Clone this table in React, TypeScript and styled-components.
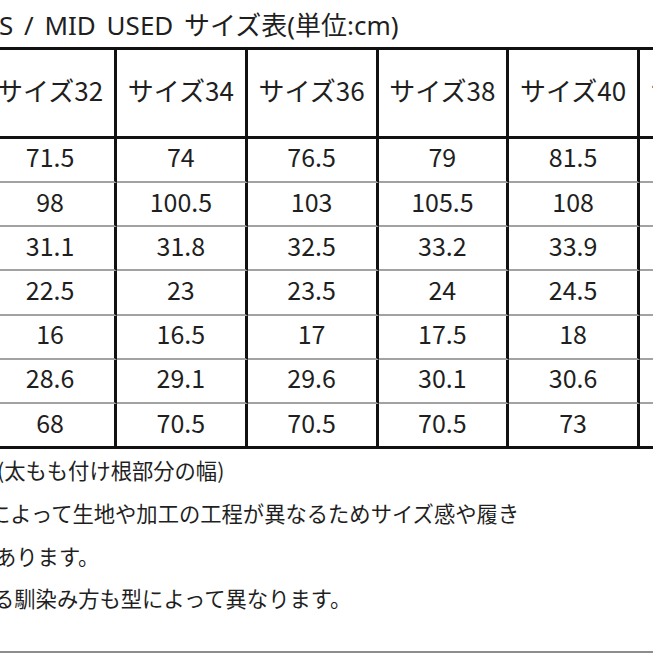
import React from "react";
import styled, { createGlobalStyle } from "styled-components";

const Global = createGlobalStyle`
  html, body { margin: 0; padding: 0; background: #ffffff; }
  body { overflow: hidden; }
`;

const Page = styled.div`
  width: 653px;
  height: 653px;
  overflow: hidden;
  background: #ffffff;
  color: #1f1f1f;
  font-family: "Noto Sans CJK JP", "Noto Sans", sans-serif;
  display: flex;
  flex-direction: column;
`;

const Title = styled.div`
  box-sizing: border-box;
  height: 47px;
  padding-top: 12px;
  margin-left: -1px;
  font-family: "Noto Sans", "Noto Sans CJK JP", sans-serif;
  font-size: 26px;
  line-height: 26px;
  word-spacing: 4px;
  white-space: nowrap;
`;

const SizeTable = styled.div`
  display: grid;
  grid-template-columns: repeat(6, 130.75px);
  margin-left: -13.75px;
  width: max-content;
`;

const HeadCell = styled.div`
  box-sizing: border-box;
  height: 92px;
  border-top: 3px solid #111;
  border-bottom: 3px solid #111;
  border-right: 3px solid #111;
  padding-bottom: 6px;
  display: flex;
  align-items: center;
  justify-content: center;
  font-size: 26px;
  line-height: 26px;
  white-space: nowrap;
`;

const DataCell = styled.div<{ $last?: boolean }>`
  box-sizing: border-box;
  height: ${(p) => (p.$last ? "45.3px" : "44.2px")};
  border-right: 3px solid #111;
  border-bottom: ${(p) => (p.$last ? "3px solid #111" : "2px solid #a2a2a2")};
  padding-bottom: 6px;
  display: flex;
  align-items: center;
  justify-content: center;
  font-size: 25px;
  line-height: 25px;
  white-space: nowrap;
`;

const Notes = styled.div`
  display: flex;
  flex-direction: column;
  padding-bottom: 31px;
`;

const NoteLine = styled.div<{ $shift: number }>`
  margin-left: ${(p) => -p.$shift}px;
  font-size: 21.3px;
  line-height: 42.7px;
  height: 42.7px;
  white-space: nowrap;
`;

const Divider = styled.div`
  height: 2px;
  background: #8d8d8d;
  flex-shrink: 0;
`;

const sizes = ["サイズ32", "サイズ34", "サイズ36", "サイズ38", "サイズ40", "サイズ42"];

const rows: string[][] = [
  ["71.5", "74", "76.5", "79", "81.5", ""],
  ["98", "100.5", "103", "105.5", "108", ""],
  ["31.1", "31.8", "32.5", "33.2", "33.9", ""],
  ["22.5", "23", "23.5", "24", "24.5", ""],
  ["16", "16.5", "17", "17.5", "18", ""],
  ["28.6", "29.1", "29.6", "30.1", "30.6", ""],
  ["68", "70.5", "70.5", "70.5", "73", ""],
];

const notes: { text: string; shift: number }[] = [
  { text: "(太もも付け根部分の幅)", shift: 3 },
  { text: "によって生地や加工の工程が異なるためサイズ感や履き", shift: 11 },
  { text: "あります。", shift: 5 },
  { text: "る馴染み方も型によって異なります。", shift: 7 },
];

export default function App() {
  return (
    <>
      <Global />
      <Page>
        <Title>S / MID USED サイズ表(単位:cm)</Title>
        <SizeTable>
          {sizes.map((s) => (
            <HeadCell key={s}>{s}</HeadCell>
          ))}
          {rows.map((r, ri) =>
            r.map((v, ci) => (
              <DataCell key={`${ri}-${ci}`} $last={ri === rows.length - 1}>
                {v}
              </DataCell>
            ))
          )}
        </SizeTable>
        <Notes>
          {notes.map((n) => (
            <NoteLine key={n.text} $shift={n.shift}>
              {n.text}
            </NoteLine>
          ))}
        </Notes>
        <Divider />
      </Page>
    </>
  );
}
